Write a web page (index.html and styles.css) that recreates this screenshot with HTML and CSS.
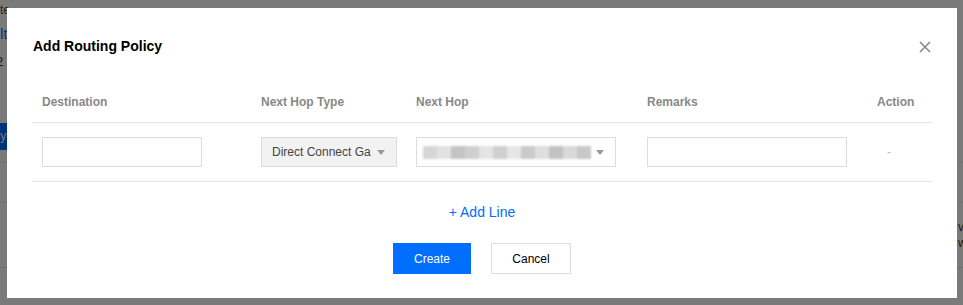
FILE: index.html
```html
<!DOCTYPE html>
<html lang="en">
<head>
    <meta charset="UTF-8">
    <meta name="viewport" content="width=device-width, initial-scale=1.0">
    <title>Add Routing Policy</title>
    <link rel="stylesheet" href="styles.css">
</head>
<body>
    <!-- page behind the dialog -->
    <div class="page">
        <div class="page-text">Route</div>
        <div class="page-link">Default</div>
        <div class="page-num">2</div>
        <div class="page-btn">Add Policy</div>
        <div class="page-row first"></div>
        <div class="page-row"></div>
        <div class="page-row tall">
            <span class="page-right">v<br>w</span>
        </div>
    </div>

    <div class="mask"></div>

    <div class="dialog">
        <div class="dialog-head">
            <h3>Add Routing Policy</h3>
            <svg class="close" width="12" height="12" viewBox="0 0 12 12">
                <path d="M1 1 L11 11 M11 1 L1 11" stroke="#888" stroke-width="1.6" fill="none"/>
            </svg>
        </div>

        <div class="table">
            <div class="row head">
                <div class="cell">Destination</div>
                <div class="cell">Next Hop Type</div>
                <div class="cell">Next Hop</div>
                <div class="cell">Remarks</div>
                <div class="cell">Action</div>
            </div>
            <div class="row body">
                <div class="cell"><input type="text" class="input w160"></div>
                <div class="cell">
                    <div class="select grey">
                        <span>Direct Connect Ga</span>
                        <i class="caret"></i>
                    </div>
                </div>
                <div class="cell">
                    <div class="select w200">
                        <span class="blurred">
                            <b style="background:#d6d6d6"></b><b style="background:#e2e2e2"></b><b style="background:#c4c4c4"></b><b style="background:#cfcfcf"></b><b style="background:#e4e4e4"></b><b style="background:#d0d0d0"></b><b style="background:#e6e6e6"></b><b style="background:#cacaca"></b><b style="background:#dedede"></b><b style="background:#c2c2c2"></b><b style="background:#d9d9d9"></b><b style="background:#c8c8c8"></b>
                        </span>
                        <i class="caret"></i>
                    </div>
                </div>
                <div class="cell"><input type="text" class="input w200"></div>
                <div class="cell action">-</div>
            </div>
        </div>

        <div class="add-line"><a href="#">+ Add Line</a></div>

        <div class="footer">
            <button type="button" class="btn primary">Create</button>
            <button type="button" class="btn">Cancel</button>
        </div>
    </div>
</body>
</html>
```

FILE: styles.css
```css
body {
    font-family: "Liberation Sans", Arial, sans-serif;
    background-color: #fff;
    margin: 0;
    padding: 0;
    width: 963px;
    height: 305px;
    overflow: hidden;
}

/* page underneath */
.page {
    font-size: 12px;
    color: #333;
}

.page-text {
    margin-left: -22px;
    padding-top: 3px;
    line-height: 14px;
    color: #6b4a1c;
}

.page-link {
    margin-left: -37px;
    margin-top: 9px;
    line-height: 16px;
    font-size: 14px;
    color: #006eff;
}

.page-num {
    margin-left: -4px;
    margin-top: 13px;
    line-height: 14px;
    font-size: 13px;
}

.page-btn {
    margin-left: -60px;
    margin-top: 54px;
    width: 76px;
    height: 27px;
    line-height: 27px;
    background-color: #006eff;
    color: #fff;
    text-align: center;
}

.page-row {
    height: 39px;
    border-bottom: 1px solid #e5e5e5;
}

.page-row.first {
    height: 12px;
}

.page-row.tall {
    height: 64px;
    position: relative;
}

.page-right {
    position: absolute;
    left: 958px;
    top: 16px;
    line-height: 16px;
    color: #4a3a22;
}

.mask {
    position: fixed;
    inset: 0;
    background-color: rgba(0, 0, 0, 0.52);
}

/* dialog */
.dialog {
    position: fixed;
    left: 7px;
    top: 8px;
    width: 900px;
    height: 265px;
    padding: 0 25px 25px;
    background-color: #fff;
}

.dialog-head {
    display: flex;
    align-items: center;
    justify-content: space-between;
    padding-top: 30px;
}

.dialog-head h3 {
    margin: 0 0 0 1px;
    font-size: 14px;
    line-height: 16px;
    font-weight: bold;
    color: #000;
}

.close {
    margin-right: 1px;
    margin-top: 1px;
}

.table {
    margin-top: 27px;
}

.row {
    display: grid;
    grid-template-columns: 219px 155px 231px 230px 1fr;
    border-bottom: 1px solid #e5e5e5;
}

.row.head {
    height: 41px;
    align-items: center;
    font-size: 12px;
    font-weight: bold;
    color: #888;
}

.row.body {
    padding: 14px 0;
    align-items: center;
    font-size: 12px;
    color: #444;
}

.cell {
    padding-left: 10px;
}

.action {
    padding-left: 20px;
    color: #bbb;
}

.input {
    box-sizing: border-box;
    height: 30px;
    border: 1px solid #ddd;
    padding: 0 10px;
    margin: 0;
    display: block;
}

.w160 {
    width: 160px;
}

.w200 {
    width: 200px;
}

.select {
    box-sizing: border-box;
    height: 30px;
    border: 1px solid #ddd;
    display: flex;
    align-items: center;
    justify-content: space-between;
    padding: 0 11px 0 10px;
}

.select.grey {
    width: 136px;
    background-color: #f2f2f2;
}

.caret {
    width: 0;
    height: 0;
    border-left: 4px solid transparent;
    border-right: 4px solid transparent;
    border-top: 5px solid #999;
}

.blurred {
    display: flex;
    margin-left: -4px;
    filter: blur(1.2px);
}

.blurred b {
    display: block;
    width: 14px;
    height: 13px;
}

.add-line {
    text-align: center;
    margin-top: 20px;
    line-height: 20px;
    font-size: 14px;
}

a {
    text-decoration: none;
    color: #006eff;
}

.footer {
    display: flex;
    justify-content: center;
    gap: 20px;
    margin-top: 21px;
}

.btn {
    font-family: "Liberation Sans", Arial, sans-serif;
    font-size: 12px;
    height: 31px;
    min-width: 80px;
    padding: 0 20px;
    background-color: #fff;
    color: #000;
    border: 1px solid #ddd;
    cursor: pointer;
}

.btn.primary {
    min-width: 78px;
    background-color: #006eff;
    border-color: #006eff;
    color: #fff;
}
```
